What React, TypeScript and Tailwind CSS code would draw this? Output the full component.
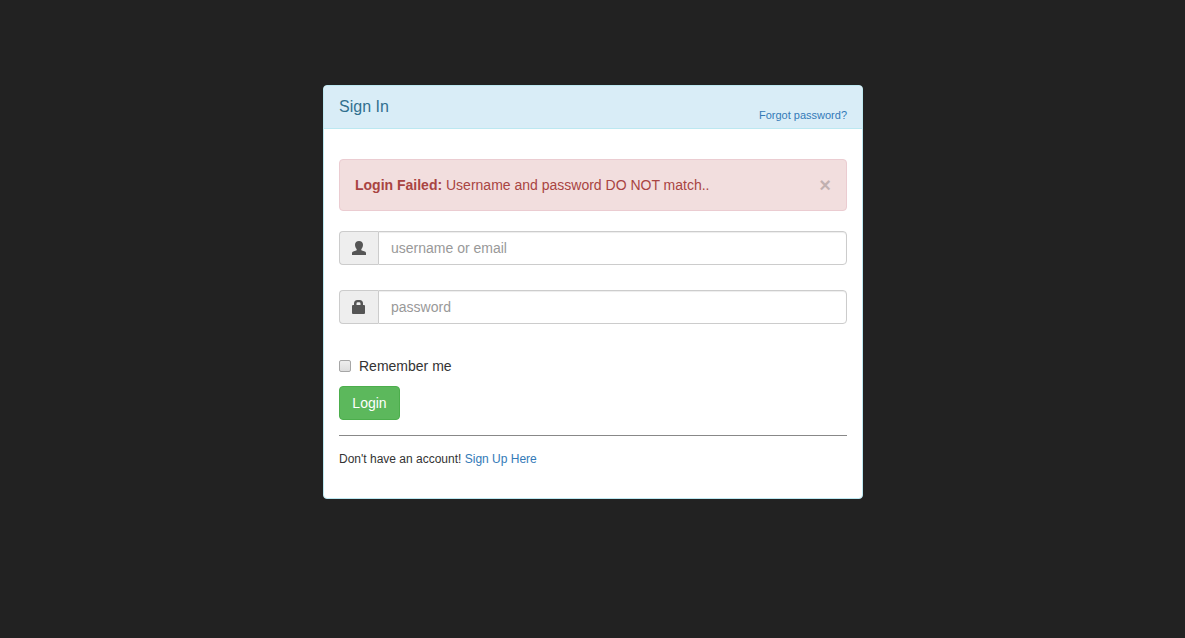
import type { ReactNode } from "react";

function UserIcon() {
  return (
    <svg width="14" height="14" viewBox="0 0 14 14" fill="#555555" aria-hidden="true">
      <path d="M7 0C4.500 0 3 1.500 3 3.800C3 5.600 3.800 7.300 4.700 8.200V9C4.700 9.300 4.500 9.500 4.200 9.600L1.200 10.600C.4 10.900 0 11.400 0 12.200V14H14V12.200C14 11.400 13.600 10.900 12.800 10.600L9.800 9.600C9.500 9.500 9.300 9.300 9.300 9V8.200C10.200 7.300 11 5.600 11 3.800C11 1.500 9.500 0 7 0Z" />
    </svg>
  );
}

function LockIcon() {
  return (
    <svg width="14" height="14" viewBox="0 0 14 14" fill="#555555" aria-hidden="true">
      <path
        fillRule="evenodd"
        d="M2 5V3.500Q2 0 5.500 0H7.500Q11 0 11 3.500V5H12Q13 5 13 6V13Q13 14 12 14H1Q0 14 0 13V6Q0 5 1 5ZM4.500 5H8.500V3.500Q8.500 2.300 7.300 2.300H5.700Q4.500 2.300 4.500 3.500Z"
      />
    </svg>
  );
}

type FieldProps = {
  id: string;
  type: string;
  placeholder: string;
  label: string;
  icon: ReactNode;
};

function Field({ id, type, placeholder, label, icon }: FieldProps) {
  return (
    <div className="mb-[25px] flex h-[34px]">
      <label
        htmlFor={id}
        aria-label={label}
        className="flex w-[39px] shrink-0 items-center justify-center rounded-l border border-r-0 border-[#cccccc] bg-[#eeeeee]"
      >
        {icon}
      </label>
      <input
        id={id}
        type={type}
        placeholder={placeholder}
        className="min-w-0 flex-1 rounded-r border border-[#cccccc] bg-white px-3 text-sm text-[#555555] shadow-[inset_0_1px_1px_rgba(0,0,0,0.075)] outline-none placeholder:text-[#999999]"
      />
    </div>
  );
}

export default function App() {
  return (
    <main className="min-h-screen bg-[#222222] pt-[85px] pr-4 pb-10 pl-[17px] font-['Liberation_Sans',Arial,sans-serif] text-sm leading-5 text-[#333333]">
      <section className="mx-auto max-w-[540px] rounded border border-[#bce8f1] bg-white">
        <header className="flex items-start justify-between rounded-t-[3px] border-b border-[#bce8f1] bg-[#d9edf7] px-[15px] pt-3 pb-1">
          <h1 className="text-base leading-[18px] text-[#31708f]">Sign In</h1>
          <a href="#forgot" className="mt-2 text-[11px] leading-[18px] text-[#337ab7]">
            Forgot password?
          </a>
        </header>
        <form className="px-[15px] pt-[30px] pb-[30px]" onSubmit={(e) => e.preventDefault()}>
          <div
            role="alert"
            className="mb-5 flex items-center justify-between rounded border border-[#ebccd1] bg-[#f2dede] p-[15px] text-[#a94442]"
          >
            <p>
              <strong>Login Failed:</strong> Username and password DO NOT match..
            </p>
            <button
              type="button"
              aria-label="Close"
              className="text-xl leading-5 font-bold text-black opacity-20"
            >
              ×
            </button>
          </div>
          <Field id="username" type="text" placeholder="username or email" label="Username or email" icon={<UserIcon />} />
          <Field id="password" type="password" placeholder="password" label="Password" icon={<LockIcon />} />
          <label className="mt-8 flex items-center gap-2">
            <input
              type="checkbox"
              className="size-3 appearance-none rounded-[2px] border border-[#a6a6a6] bg-linear-to-b from-[#eeeeee] to-[#dddddd] checked:from-[#337ab7] checked:to-[#337ab7]"
            />
            Remember me
          </label>
          <button
            type="submit"
            className="mt-[10px] h-[34px] min-w-[61px] rounded border border-[#4cae4c] bg-[#5cb85c] px-3 text-white"
          >
            Login
          </button>
          <div className="mt-[15px] border-t border-[#888888] pt-[15px] text-xs leading-[17px]">
            Don't have an account!{" "}
            <a href="#signup" className="text-[#337ab7]">
              Sign Up Here
            </a>
          </div>
        </form>
      </section>
    </main>
  );
}
